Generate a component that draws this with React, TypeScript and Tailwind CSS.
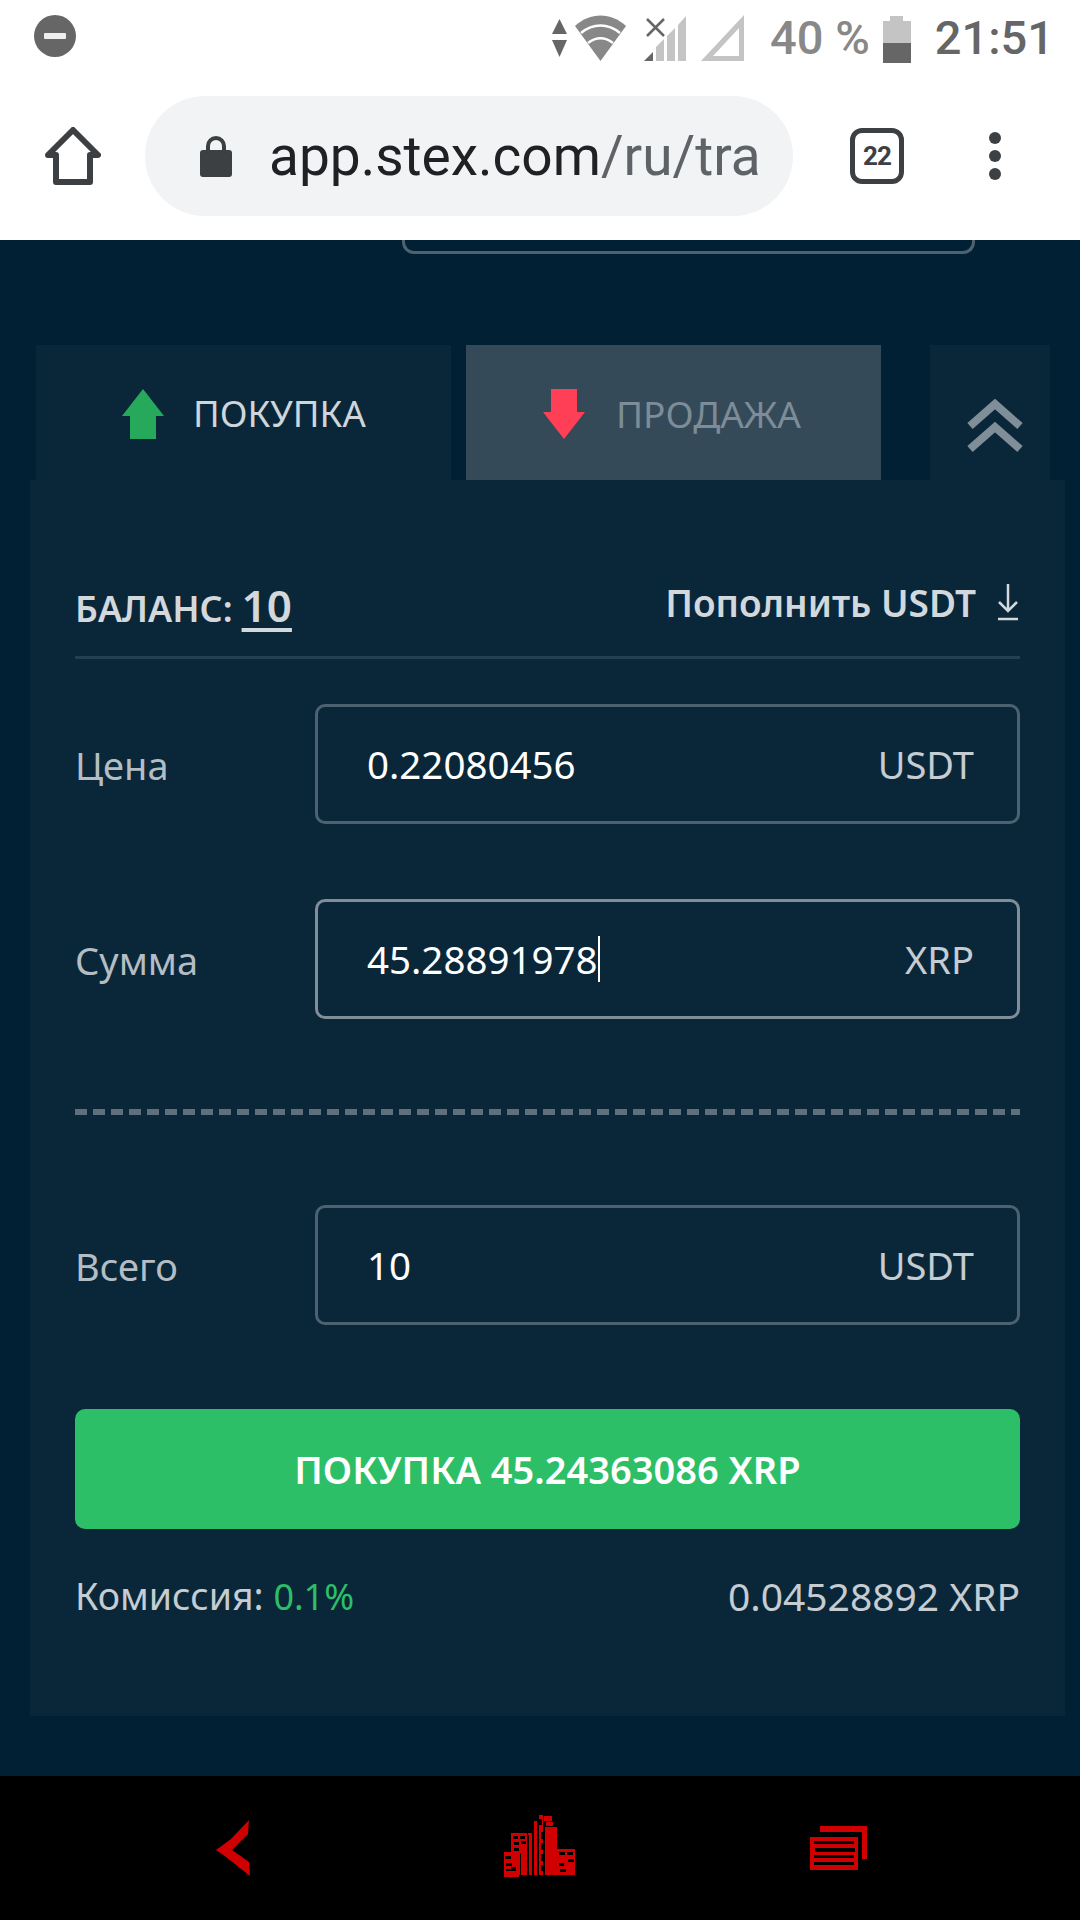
const font = "font-['Noto_Sans','Open_Sans',sans-serif]";

const StatusBar = () => (
  <div className="flex h-[70px] items-center justify-between bg-white pl-[33px] pr-[26px] font-['Roboto',sans-serif]">
    <svg width="44" height="44" viewBox="0 0 44 44" className="mt-[2px]">
      <circle cx="22" cy="22" r="21" fill="#666" />
      <rect x="11" y="19" width="22" height="6" rx="1" fill="#eee" />
    </svg>
    <div className="flex items-center">
      <svg width="193" height="70" viewBox="555 0 193 70" className="mr-[25px]">
        <path d="M562.5 19l7.5 15h-15zM555 40h15l-7.500 17z" fill="#666" />
        <path d="M578 26c15-14 36-14 51 0l-25.500 35z" fill="#888" />
        <path d="M584 33c12-10 27-10 39 0M591 43c8-6 17-6 25 0" stroke="#fff" strokeWidth="2.500" fill="none" />
        <path d="M650 19l17 17M667 19l-17 17" stroke="#666" strokeWidth="2.500" />
        <path d="M659 61V47l8-8v22zM670 61V36l8-8v33zM681 61V25l8-9v45z" fill="#c4c4c4" />
        <path d="M647 61l9-9v9z" fill="#666" />
        <path d="M704 61l43-46v46z M716 56h26V28z" fill="#c4c4c4" fillRule="evenodd" />
      </svg>
      <span className="mr-[13px] mt-[4px] text-[47px] font-medium leading-none text-[#888]">40 %</span>
      <div className="mr-[24px] mt-[8px] flex h-[47px] w-[28px] flex-col items-center">
        <div className="h-[5px] w-[13px] bg-[#c4c4c4]" />
        <div className="h-[22px] w-full bg-[#c4c4c4]" />
        <div className="h-[20px] w-full bg-[#666]" />
      </div>
      <span className="mt-[4px] text-[47px] font-medium leading-none text-[#666]">21:51</span>
    </div>
  </div>
);

const BrowserBar = () => (
  <div className="flex h-[170px] items-center bg-white pt-[2px] pl-[45px]">
    <svg width="56" height="58" viewBox="0 0 56 58" fill="none" stroke="#3c4043" strokeWidth="6" strokeLinejoin="round">
      <path d="M3 28L28 3l25 25h-8v27H11V28z" />
    </svg>
    <div className="ml-[44px] flex h-[120px] w-[648px] items-center rounded-full bg-[#f1f3f4] pl-[54px]">
      <svg width="34" height="44" viewBox="0 0 34 44">
        <path d="M9 18v-6a8 8 0 0 1 16 0v6" fill="none" stroke="#3c4043" strokeWidth="4" />
        <rect x="1" y="16" width="32" height="27" rx="3" fill="#3c4043" />
      </svg>
      <span className="ml-[36px] whitespace-nowrap font-['Roboto',sans-serif] text-[55px] leading-none text-[#202124]">
        app.stex.com<span className="text-[#5f6368]">/ru/tra</span>
      </span>
    </div>
    <div className="ml-[57px] flex h-[56px] w-[54px] items-center justify-center rounded-[12px] border-[5px] border-[#3c4043] font-['Roboto',sans-serif] text-[26px] font-bold tracking-[-1px] text-[#3c4043]">
      22
    </div>
    <div className="ml-[85px] flex flex-col gap-[6px]">
      <div className="size-[12px] rounded-full bg-[#3c4043]" />
      <div className="size-[12px] rounded-full bg-[#3c4043]" />
      <div className="size-[12px] rounded-full bg-[#3c4043]" />
    </div>
  </div>
);

const Tabs = () => (
  <div className="flex h-[135px] pl-[36px] pr-[30px]">
    <div className="flex w-[415px] items-center bg-[#0a2739] pt-[2px] pl-[86px]">
      <svg width="42" height="50" viewBox="0 0 42 50">
        <path d="M21 0l21 27H34v23H8V27H0z" fill="#27a95c" />
      </svg>
      <span className="ml-[29px] text-[36.500px] leading-none text-[#cfd5da]">ПОКУПКА</span>
    </div>
    <div className="ml-[15px] flex w-[415px] items-center bg-[#344a59] pt-[2px] pl-[77px]">
      <svg width="42" height="50" viewBox="0 0 42 50">
        <path d="M8 0h26v23h8L21 50 0 23h8z" fill="#ff3f56" />
      </svg>
      <span className="ml-[31px] text-[37px] leading-none text-[#7d8c97]">ПРОДАЖА</span>
    </div>
    <div className="ml-[49px] flex w-[120px] items-center justify-center bg-[#0a2739] pl-[10px] pt-[26px]">
      <svg width="56" height="54" viewBox="0 0 56 54" fill="none" stroke="#7f8e98" strokeWidth="8">
        <path d="M3 27L28 5l25 22M3 50l25-22 25 22" />
      </svg>
    </div>
  </div>
);

const Field = ({ label, value, unit, active, caret }: { label: string; value: string; unit: string; active?: boolean; caret?: boolean }) => (
  <div className="flex items-center">
    <span className="w-[240px] pt-[2px] text-[38px] leading-none text-[#b4bdc4]">{label}</span>
    <div
      className={`flex h-[120px] flex-1 items-center justify-between rounded-[10px] border-[3px] pl-[49px] pr-[43px] ${
        active ? "border-[#7f8e98]" : "border-[#4d6270]"
      }`}
    >
      <span className="flex items-center text-[38.500px] leading-none text-white">
        {value}
        {caret && <span className="h-[46px] w-[2px] bg-white" />}
      </span>
      <span className="text-[38px] leading-none text-[#c5ccd2]">{unit}</span>
    </div>
  </div>
);

export default function App() {
  return (
    <div className={`flex h-[1920px] w-[1080px] flex-col overflow-hidden bg-[#012033] ${font}`}>
      <StatusBar />
      <BrowserBar />
      <div className="flex-1">
        <div className="ml-[402px] h-[14px] w-[573px] rounded-b-[12px] border-x-[3px] border-b-[3px] border-[#4d6270]" />
        <div className="h-[91px]" />
        <Tabs />
        <div className="ml-[30px] h-[1236px] w-[1035px] bg-[#0a2739] pl-[45px] pr-[45px] pt-[103px]">
          <div className="flex items-end justify-between border-b-[3px] border-[#243f4f] pb-[29px]">
            <span className="text-[36px] font-semibold leading-none text-[#d3d8dd]">
              БАЛАНС:<span className="ml-[9px] text-[44px] underline underline-offset-[6px]">10</span>
            </span>
            <span className="flex items-center pb-[6px] text-[37px] font-semibold leading-none text-[#d3d8dd]">
              Пополнить USDT
              <svg width="24" height="38" viewBox="0 0 24 38" fill="none" stroke="#d3d8dd" strokeWidth="2.500" className="ml-[20px]">
                <path d="M12 1v26M3 19l9 9 9-9M2 36h20" />
              </svg>
            </span>
          </div>
          <div className="mt-[45px] flex flex-col gap-[75px]">
            <Field label="Цена" value="0.22080456" unit="USDT" />
            <Field label="Сумма" value="45.28891978" unit="XRP" active caret />
          </div>
          <div className="mt-[90px] h-[6px] bg-[repeating-linear-gradient(90deg,#5f707c_0,#5f707c_12px,transparent_12px,transparent_18px)]" />
          <div className="mt-[90px]">
            <Field label="Всего" value="10" unit="USDT" />
          </div>
          <div className="mt-[84px] flex h-[120px] items-center justify-center rounded-[10px] bg-[#2dbf67] text-[38px] font-semibold leading-none text-white">
            ПОКУПКА 45.24363086 XRP
          </div>
          <div className="mt-[47px] flex items-center justify-between text-[37.500px] leading-none text-[#c5ccd2]">
            <span>
              Комиссия: <span className="text-[36px] text-[#2dbf67]">0.1%</span>
            </span>
            <span className="text-[39px]">0.04528892 XRP</span>
          </div>
        </div>
        <div className="h-[60px]" />
      </div>
      <div className="flex h-[144px] items-center bg-black pl-[216px]">
        <svg width="35" height="56" viewBox="0 0 35 56">
          <path d="M33 0l-1 14-16 16 17 12 1 14-24-19-10-7 15-11z" fill="#d00000" />
        </svg>
        <svg width="71" height="62" viewBox="0 0 71 62" className="ml-[253px] mb-[4px]">
          <path d="M0 37h15v25H0zM7 18h16v42H7zM24 18h4v42h-4zM30 6h3v54h-3zM35 0h4v60h-4zM40 1h8v5h-8zM42 7h7v4h-7zM41 12h12v48H41zM52 34h19v26H52z" fill="#d00000" />
          <path d="M1 41h6v3H1zM2 48h6v3H2zM2 54h5v2H2zM9 21h5v3H9zM16 21h5v3h-5zM10 27h5v3h-5zM17 26h5v3h-5zM10 33h5v3h-5zM35 4h3v6h-3zM37 17h3v7h-3zM37 28h3v7h-3zM37 39h3v7h-3zM37 50h3v6h-3zM55 37h6v3h-6zM63 37h6v3h-6zM64 44h6v3h-6zM55 48h5v3h-5zM56 54h6v3h-6zM7 52h5v4H7z" fill="#000" />
          <path d="M16 38h1v22h-1zM24 20h1v40h-1zM29 8h1v52h-1zM34 2h1v58h-1z" fill="#000" />
        </svg>
        <svg width="57" height="44" viewBox="0 0 57 44" className="ml-[235px]">
          <path d="M10 0h47v33h-5V6H10z" fill="#d00000" />
          <path d="M0 11h48v33H0z" fill="#d00000" />
          <path d="M4 15h40v3H4zM5 22h40v4H5zM4 29h40v3H4zM4 36h40v3H4z" fill="#000" />
        </svg>
      </div>
    </div>
  );
}
